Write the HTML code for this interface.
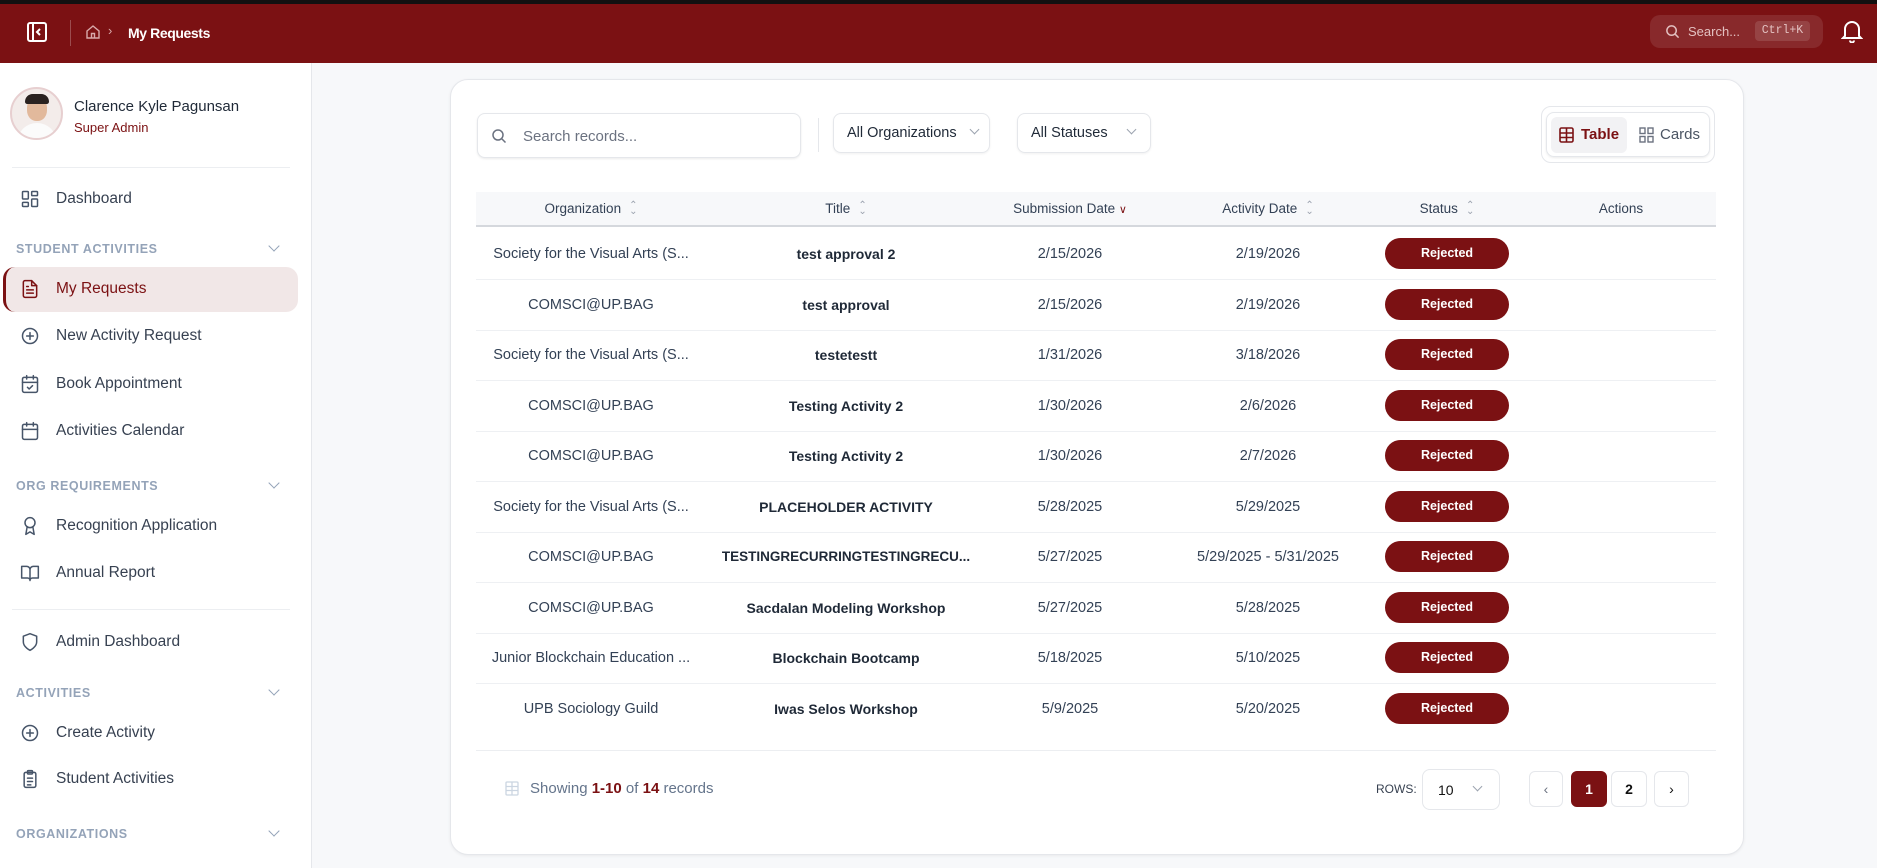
<!DOCTYPE html>
<html><head><meta charset="utf-8"><style>
*{box-sizing:border-box;margin:0;padding:0}
body{width:1877px;height:868px;overflow:hidden;background:#f7f8fa;font-family:"Liberation Sans",sans-serif;position:relative;color:#334155}
.abs{position:absolute}
.top{left:0;top:0;width:1877px;height:4px;background:#111}
.hdr{left:0;top:4px;width:1877px;height:59px;background:#7b1113}
.side{left:0;top:63px;width:312px;height:805px;background:#fff;border-right:1px solid #e5e7eb}
.mi{position:absolute;left:20px;font-size:15.5px;color:#374151;display:flex;align-items:center;gap:16px;height:24px}
.mi svg{width:20px;height:20px;fill:none;stroke:#475569;stroke-width:1.8;stroke-linecap:round;stroke-linejoin:round}
.sec{position:absolute;left:16px;font-size:12.5px;font-weight:bold;color:#94a3b8;letter-spacing:.6px}
.chev{position:absolute;left:270px;width:8px;height:8px;border-right:1.5px solid #94a3b8;border-bottom:1.5px solid #94a3b8;transform:rotate(45deg)}
.card{left:450px;top:79px;width:1294px;height:776px;background:#fff;border:1px solid #e5e7eb;border-radius:18px;box-shadow:0 1px 3px rgba(0,0,0,.06)}
.th{position:absolute;top:0;height:34px;line-height:34px;font-size:13.5px;color:#334155;text-align:center;transform:translateX(-50%);white-space:nowrap}
.row{position:absolute;left:476px;width:1240px;height:51px;border-bottom:1px solid #eef0f3}
.c{position:absolute;top:0;height:50px;line-height:50px;font-size:14.5px;color:#334155;transform:translateX(-50%);white-space:nowrap}
.b{font-weight:bold;color:#1f2937;font-size:14px}
.badge{position:absolute;left:1385px;top:9px;width:124px;height:31px;border-radius:16px;background:#7b1113;color:#fff;font-size:12.5px;font-weight:bold;text-align:center;line-height:31px}
.sort{display:inline-block;margin-left:8px;color:#9ca3af;font-size:10px;vertical-align:middle;line-height:6px}
.pb{position:absolute;top:771px;height:36px;border:1px solid #e5e7eb;border-radius:6px;background:#fff;text-align:center;line-height:34px;font-size:14px;font-weight:bold;color:#111}
</style></head><body>
<div class="abs top"></div>
<div class="abs hdr">
 <svg class="abs" style="left:26px;top:17px" width="22" height="22" viewBox="0 0 22 22" fill="none" stroke="#fff" stroke-width="2"><rect x="2" y="2" width="18" height="18" rx="2"/><line x1="7" y1="2" x2="7" y2="20"/><path d="M14 8l-3 3 3 3"/></svg>
 <div class="abs" style="left:70px;top:16px;width:1px;height:26px;background:rgba(255,255,255,.25)"></div>
 <svg class="abs" style="left:85px;top:20px" width="16" height="16" viewBox="0 0 16 16" fill="none" stroke="#d9a9aa" stroke-width="1.4"><path d="M2 7l6-5 6 5v7H2z"/><path d="M6.5 14V9.5h3V14"/></svg>
 <div class="abs" style="left:108px;top:19px;color:#d9a9aa;font-size:13px">›</div>
 <div class="abs" style="left:128px;top:21px;color:#fff;font-weight:bold;font-size:14px;letter-spacing:-.4px">My Requests</div>
 <div class="abs" style="left:1650px;top:11px;width:173px;height:33px;border-radius:10px;background:rgba(255,255,255,.1)">
  <svg class="abs" style="left:15px;top:9px" width="15" height="15" viewBox="0 0 16 16" fill="none" stroke="#e3c0c0" stroke-width="1.6"><circle cx="7" cy="7" r="5"/><path d="M11 11l3.5 3.5"/></svg>
  <div class="abs" style="left:38px;top:9px;color:#e3c0c0;font-size:13px">Search...</div>
  <div class="abs" style="left:105px;top:6px;width:55px;height:20px;border-radius:4px;background:rgba(255,255,255,.12);color:#e3c0c0;font-family:'Liberation Mono',monospace;font-size:11.5px;text-align:center;line-height:20px">Ctrl+K</div>
 </div>
 <svg class="abs" style="left:1841px;top:15px" width="22" height="24" viewBox="0 0 22 24" fill="none" stroke="#fff" stroke-width="2"><path d="M4 17V10a7 7 0 0114 0v7l2 2H2z"/><path d="M9 21.5a2 2 0 004 0"/></svg>
</div>

<div class="abs side">
 <div class="abs" style="left:10px;top:24px;width:53px;height:53px;border-radius:50%;border:2px solid #e7cfd0;background:#f3ecea;overflow:hidden">
  <div class="abs" style="left:15px;top:8px;width:20px;height:24px;border-radius:45%;background:#e2b99c"></div>
  <div class="abs" style="left:13px;top:5px;width:24px;height:10px;border-radius:10px 10px 3px 3px;background:#2a2220"></div>
  <div class="abs" style="left:5px;top:34px;width:40px;height:20px;border-radius:20px 20px 0 0;background:#fbfbfb"></div>
 </div>
 <div class="abs" style="left:74px;top:35px;font-size:15px;color:#1f2937">Clarence Kyle Pagunsan</div>
 <div class="abs" style="left:74px;top:57px;font-size:13px;color:#7b1113">Super Admin</div>
 <div class="abs" style="left:12px;top:104px;width:278px;height:1px;background:#eceef1"></div>

 <div class="mi" style="top:124px"><svg viewBox="0 0 24 24"><rect x="3" y="3" width="7" height="9" rx="1"/><rect x="14" y="3" width="7" height="5" rx="1"/><rect x="14" y="12" width="7" height="9" rx="1"/><rect x="3" y="16" width="7" height="5" rx="1"/></svg>Dashboard</div>
 <div class="sec" style="top:179px">STUDENT ACTIVITIES</div><div class="chev" style="top:179px"></div>
 <div class="abs" style="left:3px;top:204px;width:295px;height:45px;border-radius:12px;background:#f1e7e7;border-left:3px solid #7b1113"></div>
 <div class="mi" style="top:214px;color:#7b1113"><svg viewBox="0 0 24 24" style="stroke:#7b1113"><path d="M14 2H6a2 2 0 00-2 2v16a2 2 0 002 2h12a2 2 0 002-2V8z"/><path d="M14 2v6h6M8 13h8M8 17h8M8 9h2"/></svg>My Requests</div>
 <div class="mi" style="top:261px"><svg viewBox="0 0 24 24"><circle cx="12" cy="12" r="9"/><path d="M12 8v8M8 12h8"/></svg>New Activity Request</div>
 <div class="mi" style="top:309px"><svg viewBox="0 0 24 24"><rect x="3" y="4" width="18" height="18" rx="2"/><path d="M16 2v4M8 2v4M3 10h18M9 16l2 2 4-4"/></svg>Book Appointment</div>
 <div class="mi" style="top:356px"><svg viewBox="0 0 24 24"><rect x="3" y="4" width="18" height="18" rx="2"/><path d="M16 2v4M8 2v4M3 10h18"/></svg>Activities Calendar</div>
 <div class="sec" style="top:416px">ORG REQUIREMENTS</div><div class="chev" style="top:416px"></div>
 <div class="mi" style="top:451px"><svg viewBox="0 0 24 24"><circle cx="12" cy="8" r="6"/><path d="M15.5 13.5L17 22l-5-3-5 3 1.5-8.5"/></svg>Recognition Application</div>
 <div class="mi" style="top:498px"><svg viewBox="0 0 24 24"><path d="M2 4h6a4 4 0 014 4v13a3 3 0 00-3-3H2zM22 4h-6a4 4 0 00-4 4v13a3 3 0 013-3h7z"/></svg>Annual Report</div>
 <div class="abs" style="left:12px;top:546px;width:278px;height:1px;background:#eceef1"></div>
 <div class="mi" style="top:567px"><svg viewBox="0 0 24 24"><path d="M12 22s8-4 8-10V5l-8-3-8 3v7c0 6 8 10 8 10z"/></svg>Admin Dashboard</div>
 <div class="sec" style="top:623px">ACTIVITIES</div><div class="chev" style="top:623px"></div>
 <div class="mi" style="top:658px"><svg viewBox="0 0 24 24"><circle cx="12" cy="12" r="9"/><path d="M12 8v8M8 12h8"/></svg>Create Activity</div>
 <div class="mi" style="top:704px"><svg viewBox="0 0 24 24"><rect x="5" y="4" width="14" height="18" rx="2"/><rect x="9" y="2" width="6" height="4" rx="1"/><path d="M9 11h6M9 15h6M9 19h4"/></svg>Student Activities</div>
 <div class="sec" style="top:764px">ORGANIZATIONS</div><div class="chev" style="top:764px"></div>
</div>

<div class="abs card"></div>
<div class="abs" style="left:477px;top:113px;width:324px;height:45px;border:1px solid #e5e7eb;border-radius:8px;background:#fff;box-shadow:0 1px 2px rgba(0,0,0,.08)">
 <svg class="abs" style="left:13px;top:14px" width="16" height="16" viewBox="0 0 16 16" fill="none" stroke="#6b7280" stroke-width="1.5"><circle cx="7" cy="7" r="5"/><path d="M11 11l3.5 3.5"/></svg>
 <div class="abs" style="left:45px;top:14px;font-size:15px;color:#6b7280">Search records...</div>
</div>
<div class="abs" style="left:818px;top:118px;width:1px;height:34px;background:#e5e7eb"></div>
<div class="abs" style="left:833px;top:113px;width:157px;height:40px;border:1px solid #e5e7eb;border-radius:8px;box-shadow:0 1px 2px rgba(0,0,0,.06)"><span class="abs" style="left:13px;top:11px;font-size:14.5px;color:#1f2937">All Organizations</span><div class="chev" style="left:137px;top:12px;width:7px;height:7px;border-color:#9ca3af"></div></div>
<div class="abs" style="left:1017px;top:113px;width:134px;height:40px;border:1px solid #e5e7eb;border-radius:8px;box-shadow:0 1px 2px rgba(0,0,0,.06)"><span class="abs" style="left:13px;top:11px;font-size:14.5px;color:#1f2937">All Statuses</span><div class="chev" style="left:110px;top:12px;width:7px;height:7px;border-color:#9ca3af"></div></div>
<div class="abs" style="left:1541px;top:106px;width:174px;height:57px;border:1px solid #e5e7eb;border-radius:10px">
 <div class="abs" style="left:4px;top:5px;width:164px;height:45px;border:1px solid #e5e7eb;border-radius:8px;box-shadow:0 1px 2px rgba(0,0,0,.08)"></div>
 <div class="abs" style="left:9px;top:10px;width:76px;height:36px;border-radius:6px;background:#f2f2f4"></div>
 <svg class="abs" style="left:17px;top:20px" width="15" height="16" viewBox="0 0 15 16" fill="none" stroke="#7b1113" stroke-width="1.6"><rect x="1" y="1" width="13" height="14" rx="1.5"/><path d="M1 6h13M1 10.5h13M7.5 1v14"/></svg>
 <div class="abs" style="left:39px;top:19px;font-size:15px;color:#7b1113;font-weight:bold">Table</div>
 <svg class="abs" style="left:97px;top:20px" width="15" height="16" viewBox="0 0 15 16" fill="none" stroke="#6b7280" stroke-width="1.4"><rect x="1" y="1" width="5" height="5.5"/><rect x="9" y="1" width="5" height="5.5"/><rect x="1" y="9.5" width="5" height="5.5"/><rect x="9" y="9.5" width="5" height="5.5"/></svg>
 <div class="abs" style="left:118px;top:19px;font-size:15px;color:#4b5563">Cards</div>
</div>

<div class="abs" style="left:476px;top:192px;width:1240px;height:35px;background:#f7f8fa;border-bottom:2px solid #d5d8dd">
 <div class="th" style="left:115px">Organization<span class="sort">⌃<br>⌄</span></div>
 <div class="th" style="left:370px">Title<span class="sort">⌃<br>⌄</span></div>
 <div class="th" style="left:594px">Submission Date <span style="color:#7b1113;font-size:11px">&#8744;</span></div>
 <div class="th" style="left:792px">Activity Date<span class="sort">⌃<br>⌄</span></div>
 <div class="th" style="left:971px">Status<span class="sort">⌃<br>⌄</span></div>
 <div class="th" style="left:1145px">Actions</div>
</div>

<div class="row" style="top:229px"><div class="c" style="left:115px">Society for the Visual Arts (S...</div><div class="c b" style="left:370px">test approval 2</div><div class="c" style="left:594px">2/15/2026</div><div class="c" style="left:792px">2/19/2026</div><div class="badge" style="left:909px">Rejected</div></div>
<div class="row" style="top:280px"><div class="c" style="left:115px">COMSCI@UP.BAG</div><div class="c b" style="left:370px">test approval</div><div class="c" style="left:594px">2/15/2026</div><div class="c" style="left:792px">2/19/2026</div><div class="badge" style="left:909px">Rejected</div></div>
<div class="row" style="top:330px"><div class="c" style="left:115px">Society for the Visual Arts (S...</div><div class="c b" style="left:370px">testetestt</div><div class="c" style="left:594px">1/31/2026</div><div class="c" style="left:792px">3/18/2026</div><div class="badge" style="left:909px">Rejected</div></div>
<div class="row" style="top:381px"><div class="c" style="left:115px">COMSCI@UP.BAG</div><div class="c b" style="left:370px">Testing Activity 2</div><div class="c" style="left:594px">1/30/2026</div><div class="c" style="left:792px">2/6/2026</div><div class="badge" style="left:909px">Rejected</div></div>
<div class="row" style="top:431px"><div class="c" style="left:115px">COMSCI@UP.BAG</div><div class="c b" style="left:370px">Testing Activity 2</div><div class="c" style="left:594px">1/30/2026</div><div class="c" style="left:792px">2/7/2026</div><div class="badge" style="left:909px">Rejected</div></div>
<div class="row" style="top:482px"><div class="c" style="left:115px">Society for the Visual Arts (S...</div><div class="c b" style="left:370px">PLACEHOLDER ACTIVITY</div><div class="c" style="left:594px">5/28/2025</div><div class="c" style="left:792px">5/29/2025</div><div class="badge" style="left:909px">Rejected</div></div>
<div class="row" style="top:532px"><div class="c" style="left:115px">COMSCI@UP.BAG</div><div class="c b" style="left:370px;font-size:13.5px">TESTINGRECURRINGTESTINGRECU...</div><div class="c" style="left:594px">5/27/2025</div><div class="c" style="left:792px">5/29/2025 - 5/31/2025</div><div class="badge" style="left:909px">Rejected</div></div>
<div class="row" style="top:583px"><div class="c" style="left:115px">COMSCI@UP.BAG</div><div class="c b" style="left:370px">Sacdalan Modeling Workshop</div><div class="c" style="left:594px">5/27/2025</div><div class="c" style="left:792px">5/28/2025</div><div class="badge" style="left:909px">Rejected</div></div>
<div class="row" style="top:633px"><div class="c" style="left:115px">Junior Blockchain Education ...</div><div class="c b" style="left:370px">Blockchain Bootcamp</div><div class="c" style="left:594px">5/18/2025</div><div class="c" style="left:792px">5/10/2025</div><div class="badge" style="left:909px">Rejected</div></div>
<div class="row" style="top:684px;border-bottom:none"><div class="c" style="left:115px">UPB Sociology Guild</div><div class="c b" style="left:370px">Iwas Selos Workshop</div><div class="c" style="left:594px">5/9/2025</div><div class="c" style="left:792px">5/20/2025</div><div class="badge" style="left:909px">Rejected</div></div>

<div class="abs" style="left:476px;top:750px;width:1240px;height:1px;background:#eceef1"></div>
<svg class="abs" style="left:505px;top:781px" width="14" height="15" viewBox="0 0 14 15" fill="none" stroke="#cbd5e1" stroke-width="1.3"><rect x="1" y="1" width="12" height="13" rx="1"/><path d="M1 5.5h12M1 9.5h12M7 1v13"/></svg>
<div class="abs" style="left:530px;top:780px;font-size:15px;color:#64748b">Showing <b style="color:#7b1113">1-10</b> of <b style="color:#7b1113">14</b> records</div>
<div class="abs" style="left:1376px;top:782px;font-size:12px;color:#374151">ROWS:</div>
<div class="abs" style="left:1422px;top:769px;width:78px;height:41px;border:1px solid #e5e7eb;border-radius:8px"><span class="abs" style="left:15px;top:12px;font-size:14px;color:#111">10</span><div class="chev" style="left:51px;top:13px;width:7px;height:7px;border-color:#9ca3af"></div></div>
<div class="pb" style="left:1529px;width:34px;color:#6b7280;font-weight:normal">‹</div>
<div class="pb" style="left:1571px;width:36px;background:#7b1113;border-color:#7b1113;color:#fff">1</div>
<div class="pb" style="left:1611px;width:36px">2</div>
<div class="pb" style="left:1654px;width:35px;font-weight:normal">›</div>
</body></html>
